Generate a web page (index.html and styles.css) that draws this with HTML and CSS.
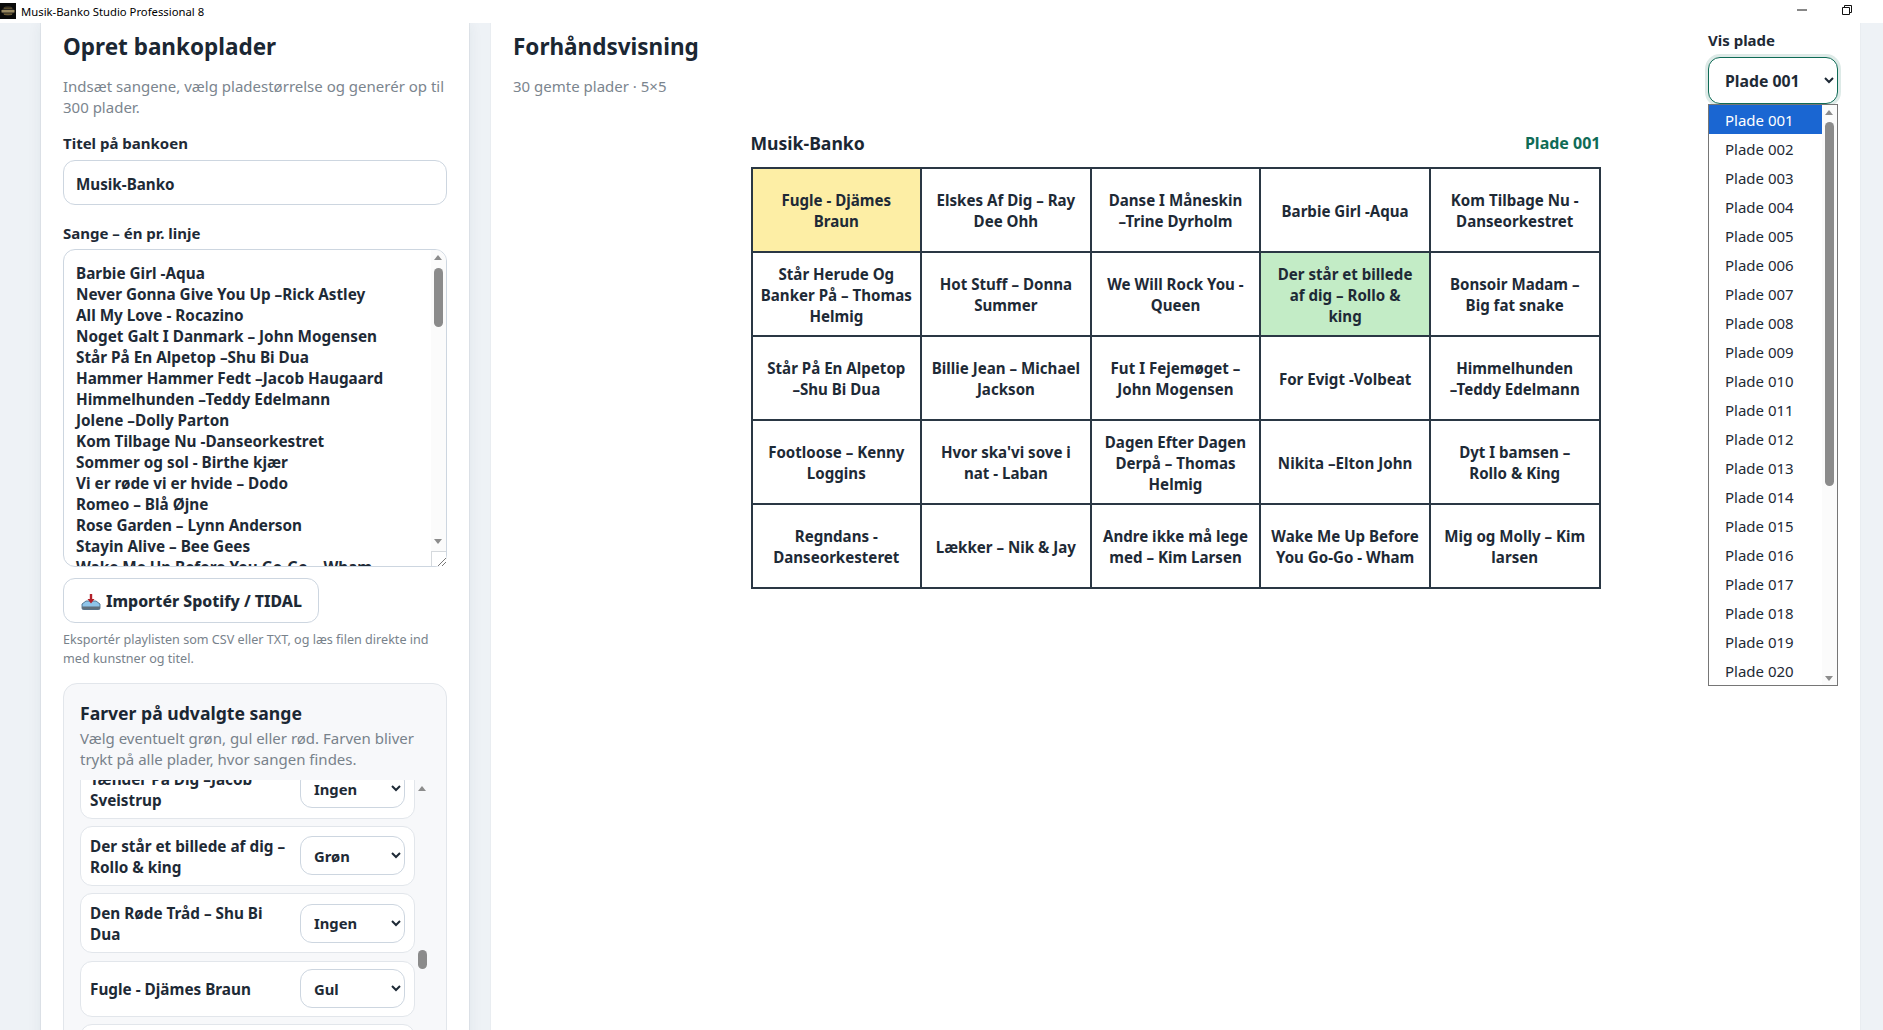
FILE: index.html
```html
<!DOCTYPE html>
<html lang="da">
<head>
<meta charset="utf-8">
<title>Musik-Banko Studio Professional 8</title>
<link rel="stylesheet" href="styles.css">
</head>
<body>
<header class="titlebar">
  <svg class="app-logo" viewBox="0 0 16 16"><rect width="16" height="16" fill="#0a0a0a"/><ellipse cx="8" cy="8" rx="6" ry="5" fill="#2a2620"/><rect x="1.500" y="7" width="13" height="2.500" fill="#9a8a62"/><rect x="4" y="4.500" width="8" height="1.500" fill="#5a4c2c"/><rect x="4" y="10.500" width="8" height="1.500" fill="#6b5a34"/></svg>
  <span class="app-title">Musik-Banko Studio Professional 8</span>
  <svg class="win-btn win-min" viewBox="0 0 10 10"><path d="M0 5h10" stroke="#111" stroke-width="1" fill="none"/></svg>
  <svg class="win-btn win-max" viewBox="0 0 10 10"><path d="M.5 2.500h7v7h-7zM2.500 2.500v-2h7v7h-2" stroke="#111" stroke-width="1" fill="none"/></svg>
</header>
<div class="app">
  <aside class="sidebar">
    <h1 class="page-title">Opret bankoplader</h1>
    <p class="lead">Indsæt sangene, vælg pladestørrelse og generér op til 300 plader.</p>
    <label class="label label-title">Titel på bankoen</label>
    <input class="text-input" value="Musik-Banko">
    <label class="label label-songs">Sange – én pr. linje</label>
    <div class="songs-wrap">
      <textarea class="songs" spellcheck="false">Barbie Girl -Aqua
Never Gonna Give You Up –Rick Astley
All My Love - Rocazino
Noget Galt I Danmark – John Mogensen
Står På En Alpetop –Shu Bi Dua
Hammer Hammer Fedt –Jacob Haugaard
Himmelhunden –Teddy Edelmann
Jolene –Dolly Parton
Kom Tilbage Nu -Danseorkestret
Sommer og sol - Birthe kjær
Vi er røde vi er hvide – Dodo
Romeo – Blå Øjne
Rose Garden – Lynn Anderson
Stayin Alive – Bee Gees
Wake Me Up Before You Go-Go – Wham</textarea>
      <div class="sb sb-songs">
        <span class="arrow-up"></span>
        <span class="thumb thumb-songs"></span>
        <span class="arrow-down"></span>
        <span class="resizer"><svg viewBox="0 0 15 15"><path d="M6 14 14 6M10 14l4-4" stroke="#777" stroke-width="1" fill="none"/></svg></span>
      </div>
    </div>
    <button class="import-btn">
      <svg class="tray" viewBox="0 0 20 16"><path d="M1 10 5 7h10l4 3v4a1.500 1.500 0 0 1-1.500 1.500h-15A1.500 1.500 0 0 1 1 14z" fill="#8ec5ea" stroke="#3b5f7d" stroke-width=".8"/><path d="M1 12.500h18v1.500a1.500 1.500 0 0 1-1.500 1.500h-15A1.500 1.500 0 0 1 1 14z" fill="#5f6f7c"/><path d="M8.800 0h2.400v5h2.300L10 9.500 6.500 5h2.300z" fill="#b3202a"/></svg>
      <span>Importér Spotify / TIDAL</span>
    </button>
    <p class="hint">Eksportér playlisten som CSV eller TXT, og læs filen direkte ind med kunstner og titel.</p>
    <section class="colors">
      <h2 class="colors-title">Farver på udvalgte sange</h2>
      <p class="colors-desc">Vælg eventuelt grøn, gul eller rød. Farven bliver trykt på alle plader, hvor sangen findes.</p>
      <div class="color-list">
        <div class="color-rows">
          <div class="color-row first"><span>Tænder På Dig –Jacob Sveistrup</span><select class="mini-select"><option>Ingen</option></select></div>
          <div class="color-row"><span>Der står et billede af dig – Rollo &amp; king</span><select class="mini-select"><option>Grøn</option></select></div>
          <div class="color-row"><span>Den Røde Tråd – Shu Bi Dua</span><select class="mini-select"><option>Ingen</option></select></div>
          <div class="color-row tall"><span>Fugle - Djämes Braun</span><select class="mini-select"><option>Gul</option></select></div>
          <div class="color-row"><span></span><select class="mini-select"><option>Ingen</option></select></div>
        </div>
        <div class="sb sb-colors">
          <span class="arrow-up"></span>
          <span class="thumb thumb-colors"></span>
        </div>
      </div>
    </section>
  </aside>
  <main class="preview">
    <div class="preview-head">
      <div>
        <h2 class="page-title">Forhåndsvisning</h2>
        <p class="lead">30 gemte plader · 5×5</p>
      </div>
      <div class="picker">
        <label class="label">Vis plade</label>
        <select class="plate-select"><option>Plade 001</option></select>
        <div class="popup">
          <ul class="popup-list">
            <li class="sel">Plade 001</li><li>Plade 002</li><li>Plade 003</li><li>Plade 004</li><li>Plade 005</li>
            <li>Plade 006</li><li>Plade 007</li><li>Plade 008</li><li>Plade 009</li><li>Plade 010</li>
            <li>Plade 011</li><li>Plade 012</li><li>Plade 013</li><li>Plade 014</li><li>Plade 015</li>
            <li>Plade 016</li><li>Plade 017</li><li>Plade 018</li><li>Plade 019</li><li>Plade 020</li>
          </ul>
          <div class="sb sb-popup">
            <span class="arrow-up"></span>
            <span class="thumb thumb-popup"></span>
            <span class="arrow-down"></span>
          </div>
        </div>
      </div>
    </div>
    <div class="board">
      <div class="board-head"><span class="board-name">Musik-Banko</span><span class="board-no">Plade 001</span></div>
      <div class="grid">
        <div class="cell yellow"><span>Fugle - Djämes Braun</span></div>
        <div class="cell"><span>Elskes Af Dig – Ray Dee Ohh</span></div>
        <div class="cell"><span>Danse I Måneskin <span class="nb">–Trine</span> Dyrholm</span></div>
        <div class="cell"><span>Barbie Girl -Aqua</span></div>
        <div class="cell"><span>Kom Tilbage Nu - Danseorkestret</span></div>
        <div class="cell"><span>Står Herude Og Banker På – Thomas Helmig</span></div>
        <div class="cell"><span>Hot Stuff – Donna Summer</span></div>
        <div class="cell"><span>We Will Rock You - Queen</span></div>
        <div class="cell green"><span>Der står et billede af dig – Rollo &amp;<br>king</span></div>
        <div class="cell"><span>Bonsoir Madam – Big fat snake</span></div>
        <div class="cell"><span>Står På En Alpetop <span class="nb">–Shu</span> Bi Dua</span></div>
        <div class="cell"><span>Billie Jean – Michael Jackson</span></div>
        <div class="cell"><span>Fut I Fejemøget – John Mogensen</span></div>
        <div class="cell"><span>For Evigt -Volbeat</span></div>
        <div class="cell"><span>Himmelhunden <span class="nb">–Teddy</span> Edelmann</span></div>
        <div class="cell"><span>Footloose – Kenny Loggins</span></div>
        <div class="cell"><span>Hvor ska'vi sove i nat - Laban</span></div>
        <div class="cell"><span>Dagen Efter Dagen Derpå – Thomas Helmig</span></div>
        <div class="cell"><span>Nikita –Elton John</span></div>
        <div class="cell"><span>Dyt I bamsen – Rollo &amp; King</span></div>
        <div class="cell"><span>Regndans - Danseorkesteret</span></div>
        <div class="cell"><span>Lækker – Nik &amp; Jay</span></div>
        <div class="cell"><span>Andre ikke må lege med – Kim Larsen</span></div>
        <div class="cell"><span>Wake Me Up Before You Go-Go - Wham</span></div>
        <div class="cell"><span>Mig og Molly – Kim larsen</span></div>
      </div>
    </div>
  </main>
</div>
</body>
</html>
```
FILE: styles.css
```css
* { box-sizing: border-box; }
html, body { margin: 0; height: 100%; overflow: hidden; }
body {
  background: #fff;
  color: #1e2a36;
  font-family: "Noto Sans", "Open Sans", sans-serif;
}
.titlebar {
  height: 23px;
  background: #fff;
  display: flex;
  align-items: center;
  position: relative;
}
.app-logo { width: 16px; height: 16px; margin-top: -1px; }
.app-title { margin-left: 5px; font-size: 11.300px; color: #000; }
.win-btn { position: absolute; width: 10px; height: 10px; top: 5px; }
.win-min { left: 1797px; }
.win-max { left: 1842px; }
.app {
  height: 1007px;
  display: flex;
  background: #eef2f6;
  overflow: hidden;
}
.sidebar {
  width: 428px;
  margin-left: 41px;
  padding: 7px 22px 0;
  background: #fff;
  box-shadow: 0 0 14px rgba(30, 50, 70, .07), 0 0 0 1px #e3e7ec;
  flex: none;
  height: 1100px;
}
.page-title { margin: 0; font-size: 22.500px; line-height: 34px; font-weight: 700; color: #1b2733; }
.lead { margin: 12px 0 0; font-size: 15px; line-height: 21px; color: #7b858e; }
.label { display: block; font-size: 15px; line-height: 20px; font-weight: 700; color: #1e2a36; }
.label-title { margin-top: 15px; }
.label-songs { margin-top: 18px; }
.text-input {
  display: block;
  width: 100%;
  height: 45px;
  margin-top: 7px;
  padding: 2px 12px 0;
  border: 1px solid #cdd6e0;
  border-radius: 12px;
  font: 700 15.200px "Noto Sans", sans-serif;
  color: #1e2a36;
  background: #fff;
  outline: none;
}
.songs-wrap { position: relative; margin-top: 6px; height: 318px; }
.songs {
  display: block;
  width: 100%;
  height: 100%;
  padding: 13px 12px 0;
  border: 1px solid #cdd6e0;
  border-radius: 12px;
  font: 700 15.300px/21px "Noto Sans", sans-serif;
  color: #1e2a36;
  overflow: hidden;
  resize: none;
  outline: none;
  white-space: pre;
}
.sb { position: absolute; display: block; }
.sb-songs { top: 1px; right: 1px; bottom: 1px; width: 15px; background: #fbfbfb; border-radius: 0 11px 11px 0; }
.arrow-up, .arrow-down { position: absolute; left: 3px; width: 0; height: 0; border-left: 4.500px solid transparent; border-right: 4.500px solid transparent; }
.arrow-up { top: 5px; border-bottom: 5px solid #8c8c8c; }
.arrow-down { bottom: 22px; border-top: 5px solid #8c8c8c; }
.thumb { position: absolute; left: 3px; width: 9px; border-radius: 5px; background: #8b8b8b; }
.thumb-songs { top: 18px; height: 59px; }
.resizer { position: absolute; right: 0; bottom: 0; width: 15px; height: 15px; border-left: 1px solid #d5d9dd; border-top: 1px solid #d5d9dd; background: #fff; }
.resizer svg { display: block; width: 15px; height: 15px; }
.import-btn {
  display: flex;
  align-items: center;
  gap: 5px;
  margin-top: 11px;
  width: 256px;
  height: 45px;
  padding: 0 0 0 17px;
  border: 1px solid #cdd6e0;
  border-radius: 12px;
  background: #fff;
  font: 800 15.800px "Noto Sans", sans-serif;
  color: #1e2a36;
}
.tray { width: 20px; height: 16px; flex: none; margin-top: 3px; }
.hint { margin: 7px 0 0; font-size: 12.600px; line-height: 19px; color: #78828b; }
.colors {
  margin-top: 15px;
  padding: 17px 0 0 16px;
  background: #f7f8fa;
  border: 1px solid #e2e6eb;
  border-radius: 14px;
}
.colors-title { margin: 0; font-size: 17.600px; line-height: 24px; font-weight: 700; color: #1b2733; }
.colors-desc { margin: 3px 17px 0 0; font-size: 15px; line-height: 21px; color: #78828b; }
.color-list { position: relative; margin-top: 10px; height: 300px; width: 350px; overflow: hidden; }
.color-rows { width: 335px; display: flex; flex-direction: column; gap: 7.700px; }
.color-row {
  min-height: 59.500px;
  display: flex;
  align-items: center;
  gap: 10px;
  padding: 0 9px;
  background: #fff;
  border: 1px solid #e2e6eb;
  border-radius: 12px;
  font-size: 15.300px;
  line-height: 21px;
  font-weight: 700;
  color: #1e2a36;
}
.color-row.first { margin-top: -21px; }
.color-row.tall { min-height: 56px; }
.color-row span { flex: 1; padding-top: 2px; }
.mini-select {
  flex: none;
  width: 105px;
  height: 39px;
  padding-left: 9px;
  border: 1px solid #cdd6e0;
  border-radius: 12px;
  background-color: #fff;
  font: 700 14.800px "Noto Sans", sans-serif;
  color: #1e2a36;
}
.sb-colors { top: 0; right: 0; bottom: 0; width: 15px; }
.sb-colors .arrow-up { top: 6px; }
.thumb-colors { top: 170px; height: 19px; }
.preview { flex: 1; margin-left: 22px; margin-right: 23px; padding: 7px 22px 0; background: #fff; box-shadow: 0 0 0 1px #e9edf1; }
.preview-head { display: flex; justify-content: space-between; height: 98px; }
.picker { position: relative; width: 130px; }
.plate-select {
  display: block;
  width: 130px;
  height: 47px;
  margin-top: 7px;
  padding-left: 12px;
  border: 1px solid #0f6b56;
  border-radius: 12px;
  box-shadow: 0 0 0 3px rgba(15, 107, 86, .14);
  background-color: #fff;
  font: 700 15.800px "Noto Sans", sans-serif;
  color: #1e2a36;
  outline: none;
}
.popup {
  position: absolute;
  left: 0;
  top: 74px;
  width: 130px;
  height: 582px;
  background: #fff;
  border: 1px solid #767676;
}
.popup-list { list-style: none; margin: 0; padding: 0; width: 114px; }
.popup-list li { height: 29px; line-height: 30px; padding-left: 16px; font-size: 15px; color: #1e2a36; }
.popup-list li.sel { background: #1a66d2; color: #fff; }
.sb-popup { top: 0; right: 0; bottom: 0; width: 15px; background: #fbfbfb; }
.sb-popup .arrow-down { bottom: 4px; }
.thumb-popup { top: 17px; height: 364px; }
.board { width: 850px; margin: 0 auto; }
.board-head { display: flex; justify-content: space-between; align-items: center; height: 30px; margin-bottom: 9px; }
.board-name { font-size: 17.600px; font-weight: 700; color: #1b2733; }
.board-no { font-size: 16px; font-weight: 700; color: #0f6b56; }
.grid {
  display: grid;
  grid-template-columns: repeat(5, 1fr);
  grid-auto-rows: 82px;
  gap: 2px;
  padding: 2px;
  width: 850px;
  background: #2a3744;
}
.cell {
  display: flex;
  align-items: center;
  justify-content: center;
  padding: 2px 8px 0;
  background: #fff;
  text-align: center;
  font-size: 15.100px;
  line-height: 21px;
  font-weight: 700;
  color: #1e2a36;
}
.nb { white-space: nowrap; }
.cell.yellow { background: #fdeea5; }
.cell.green { background: #c3ecc6; }
```
